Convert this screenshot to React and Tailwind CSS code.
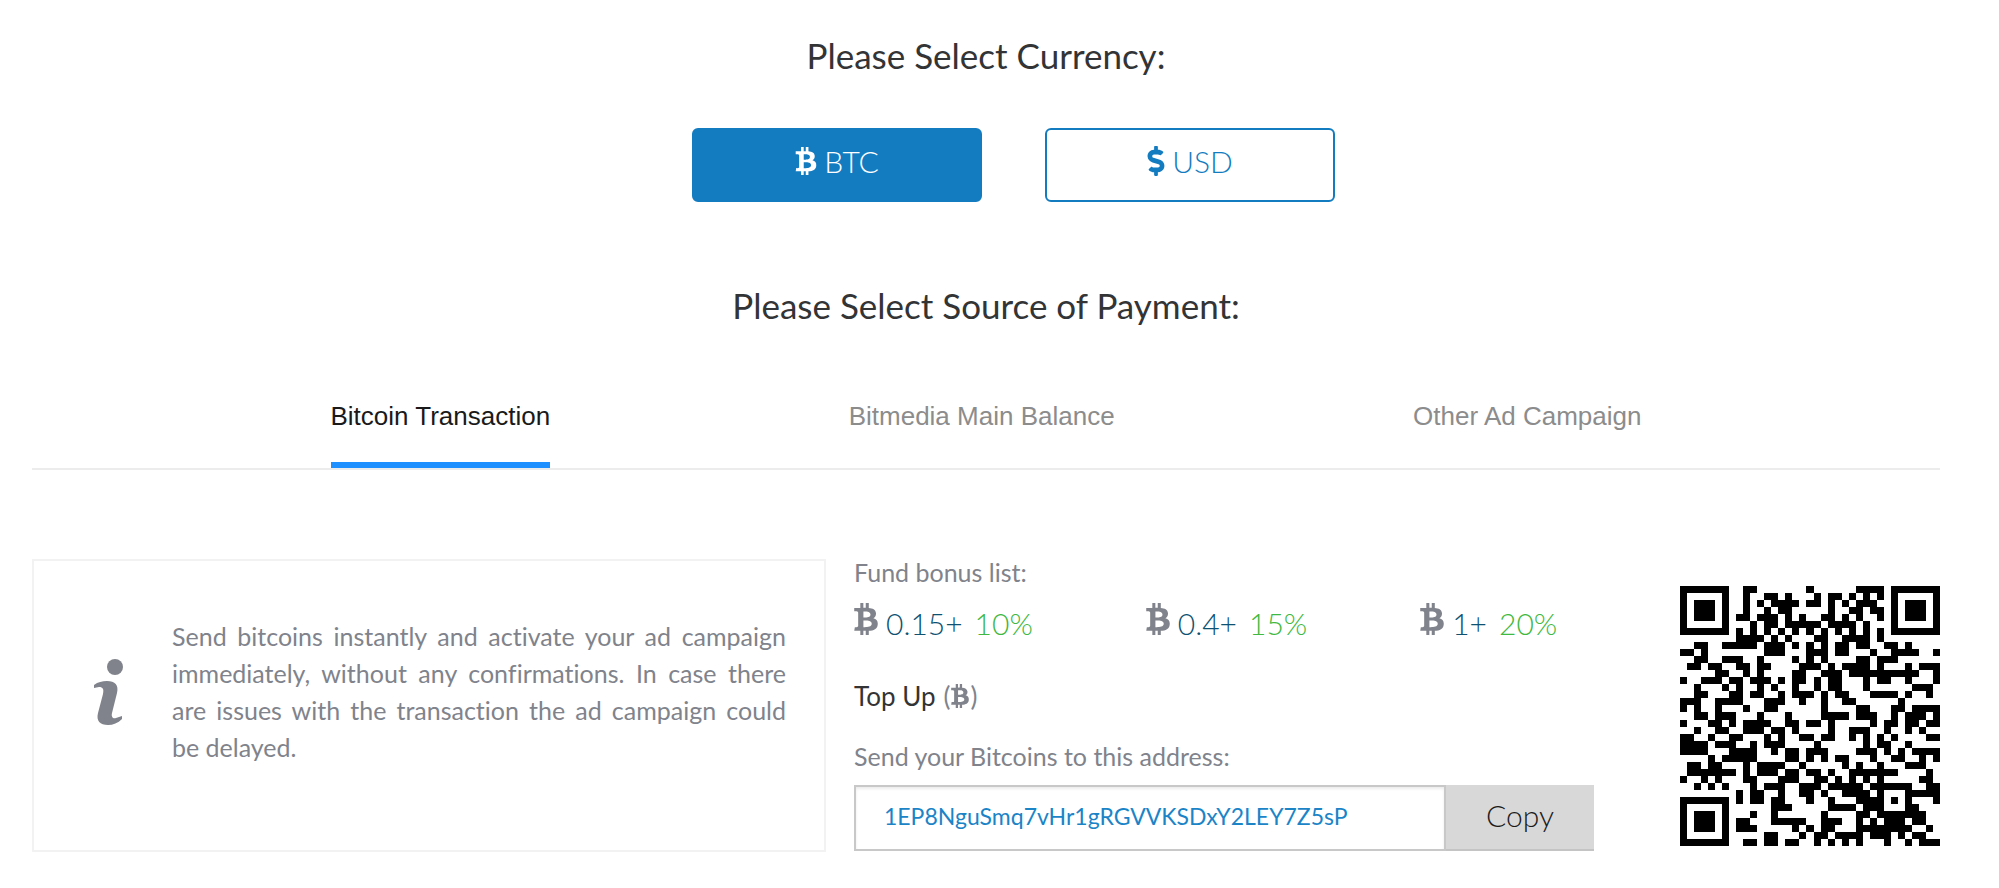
import React, { useState } from 'react';
import { FaBtc, FaDollarSign } from 'react-icons/fa';

const ADDRESS = '1EP8NguSmq7vHr1gRGVVKSDxY2LEY7Z5sP';

const tabs = ['Bitcoin Transaction', 'Bitmedia Main Balance', 'Other Ad Campaign'];

const bonuses = [
  { amount: '0.15+', percent: '10%' },
  { amount: '0.4+', percent: '15%' },
  { amount: '1+', percent: '20%' },
];

// QR code, version 5, level H, mask 3
const QR_SIZE = 37;
const QR_DATA_WORDS = 46;
const QR_BLOCKS = [11, 11, 12, 12];
const QR_EC_WORDS = 22;
const QR_FORMAT = '001100111010000';

const gfMul = (a, b) => {
  let r = 0;
  for (let i = 7; i >= 0; i--) {
    r = (r << 1) ^ ((r >>> 7) * 0x11d);
    r ^= ((b >>> i) & 1) * a;
  }
  return r;
};

const ecDivisor = (degree) => {
  const res = new Array(degree).fill(0);
  res[degree - 1] = 1;
  let root = 1;
  for (let i = 0; i < degree; i++) {
    for (let j = 0; j < degree; j++) {
      res[j] = gfMul(res[j], root);
      if (j + 1 < degree) res[j] ^= res[j + 1];
    }
    root = gfMul(root, 2);
  }
  return res;
};

const ecWords = (data) => {
  const divisor = ecDivisor(QR_EC_WORDS);
  const res = new Array(QR_EC_WORDS).fill(0);
  data.forEach((b) => {
    const factor = b ^ res.shift();
    res.push(0);
    divisor.forEach((d, i) => { res[i] ^= gfMul(d, factor); });
  });
  return res;
};

const buildQr = (text) => {
  // Mode, length, payload, terminator, padding
  let bits = '0100' + text.length.toString(2).padStart(8, '0');
  for (const ch of text) bits += ch.charCodeAt(0).toString(2).padStart(8, '0');
  bits += '0000';
  const words = bits.match(/.{8}/g).map((b) => parseInt(b, 2));
  for (let pad = 0xec; words.length < QR_DATA_WORDS; pad ^= 0xec ^ 0x11) words.push(pad);

  let pos = 0;
  const blocks = QR_BLOCKS.map((len) => words.slice(pos, (pos += len)));
  const ecs = blocks.map(ecWords);
  const out = [];
  for (let i = 0; i < 12; i++) blocks.forEach((b) => i < b.length && out.push(b[i]));
  for (let i = 0; i < QR_EC_WORDS; i++) ecs.forEach((e) => out.push(e[i]));
  const stream = out.map((w) => w.toString(2).padStart(8, '0')).join('');

  const grid = Array.from({ length: QR_SIZE }, () => new Array(QR_SIZE).fill(null));
  const set = (r, c, v) => {
    if (r >= 0 && c >= 0 && r < QR_SIZE && c < QR_SIZE) grid[r][c] = v ? 1 : 0;
  };

  // Timing, finder and alignment patterns
  for (let i = 0; i < QR_SIZE; i++) {
    set(6, i, i % 2 === 0);
    set(i, 6, i % 2 === 0);
  }
  [[3, 3], [3, QR_SIZE - 4], [QR_SIZE - 4, 3]].forEach(([r, c]) => {
    for (let y = -4; y <= 4; y++) {
      for (let x = -4; x <= 4; x++) {
        const d = Math.max(Math.abs(x), Math.abs(y));
        set(r + y, c + x, d !== 2 && d !== 4);
      }
    }
  });
  for (let y = -2; y <= 2; y++) {
    for (let x = -2; x <= 2; x++) set(30 + y, 30 + x, Math.max(Math.abs(x), Math.abs(y)) !== 1);
  }

  // Format bits, two copies
  const f = QR_FORMAT.split('').map(Number);
  [0, 1, 2, 3, 4, 5, 7, 8].forEach((c, i) => set(8, c, f[i]));
  [7, 5, 4, 3, 2, 1, 0].forEach((r, i) => set(r, 8, f[8 + i]));
  for (let i = 0; i < 7; i++) set(QR_SIZE - 1 - i, 8, f[i]);
  for (let i = 7; i < 15; i++) set(8, QR_SIZE - 15 + i, f[i]);
  set(QR_SIZE - 8, 8, 1);

  // Zigzag placement from the right edge
  let n = 0;
  for (let right = QR_SIZE - 1; right >= 1; right -= 2) {
    if (right === 6) right = 5;
    const upward = ((right + 1) & 2) === 0;
    for (let v = 0; v < QR_SIZE; v++) {
      for (let j = 0; j < 2; j++) {
        const c = right - j;
        const r = upward ? QR_SIZE - 1 - v : v;
        if (grid[r][c] !== null) continue;
        const bit = n < stream.length ? Number(stream[n]) : 0;
        grid[r][c] = bit ^ ((r + c) % 3 === 0 ? 1 : 0);
        n++;
      }
    }
  }
  return grid;
};

function QrCode({ value }) {
  const path = buildQr(value)
    .map((row, r) => row.map((on, c) => (on ? `M${c} ${r}h1v1h-1z` : '')).join(''))
    .join('');
  return (
    <svg viewBox={`0 0 ${QR_SIZE} ${QR_SIZE}`} className="w-[260px] h-[260px] shrink-0" shapeRendering="crispEdges" role="img" aria-label="Bitcoin address QR code">
      <path d={path} fill="#000" />
    </svg>
  );
}

function InfoIcon() {
  return (
    <svg viewBox="0 0 30 66" className="w-[30px] h-[66px] shrink-0" fill="#80838b" aria-hidden="true">
      <circle cx="21" cy="8" r="8" />
      <path d="M0 26C4 23 8 22 13 22C21 22 25 26 23 34L18 54C17 58 19 60 22 59L28 57L28 60C24 64 19 66 14 66C6 66 2 62 4 54L9 35C10 30 9 28 5 28L0 29Z" />
    </svg>
  );
}

export default function App() {
  const [currency, setCurrency] = useState('BTC');
  const [activeTab, setActiveTab] = useState(tabs[0]);

  const currencyClass = (name) =>
    `w-[290px] h-[74px] pb-2 flex items-center justify-center gap-1.5 rounded-md border-2 border-[#137cc1] text-[30px] font-light cursor-pointer ${currency === name ? 'bg-[#137cc1] text-white' : 'bg-white text-[#137cc1]'}`;

  return (
    <div className="bg-white pl-8 pr-[59px] pt-8 pb-9 font-['Lato',sans-serif] text-[#80838b] [font-variant-ligatures:none]">
      <h2 className="text-center text-[35px] leading-[46px] text-[#333436]">Please Select Currency:</h2>

      <div className="mt-[50px] pl-[54px] flex justify-center gap-[63px]">
        <button type="button" className={currencyClass('BTC')} onClick={() => setCurrency('BTC')}>
          <FaBtc className="w-6 h-7" /> BTC
        </button>
        <button type="button" className={currencyClass('USD')} onClick={() => setCurrency('USD')}>
          <FaDollarSign className="w-5 h-[30px]" /> USD
        </button>
      </div>

      <h2 className="mt-20 text-center text-[35px] leading-[46px] text-[#333436]">Please Select Source of Payment:</h2>

      <div role="tablist" className="mt-[50px] flex justify-evenly border-b-2 border-[#ececec] font-['Liberation_Sans',Arial,sans-serif] text-[26px]">
        {tabs.map((tab) => (
          <button
            key={tab}
            type="button"
            role="tab"
            aria-selected={activeTab === tab}
            onClick={() => setActiveTab(tab)}
            className={`pt-[14px] pb-[22px] leading-12 border-b-6 cursor-pointer ${activeTab === tab ? 'border-[#1e90ff] text-[#1a1a1a]' : 'border-transparent text-[#8c8c8c]'}`}
          >
            {tab}
          </button>
        ))}
      </div>

      <div className="mt-[89px] flex">
        <section className="flex-1 h-[293px] flex items-center border-2 border-[#f2f2f3] pl-[60px] pr-[38px] pb-7">
          <InfoIcon />
          <p className="ml-12 text-[25px] leading-[37px] text-justify">
            Send bitcoins instantly and activate your ad campaign immediately, without any confirmations. In case there are issues with the transaction the ad campaign could be delayed.
          </p>
        </section>

        <section className="w-[740px] ml-7">
          <p className="text-[25px] leading-[26px]">Fund bonus list:</p>
          <ul className="mt-[18px] flex gap-[113px] text-[30px] leading-10 font-light">
            {bonuses.map((b) => (
              <li key={b.percent} className="flex">
                <FaBtc className="w-6 h-8 mr-2" />
                <span className="text-[#0d5272]">{b.amount}</span>
                <span className="ml-3 text-[#3fb941]">{b.percent}</span>
              </li>
            ))}
          </ul>
          <p className="mt-[34px] flex items-center text-[26px] leading-[38px]">
            <span className="text-[#333436]">Top Up</span>
            <span className="ml-2">(</span>
            <FaBtc className="w-5 h-6" />
            <span>)</span>
          </p>
          <label htmlFor="address" className="mt-[22px] block text-[25px] leading-[38px]">Send your Bitcoins to this address:</label>
          <div className="mt-[10px] flex h-[66px]">
            <input
              id="address"
              readOnly
              value={ADDRESS}
              className="flex-1 min-w-0 border-2 border-[#c8c8c8] pl-7 pb-1 text-[23px] text-[#1b84c7] shadow-[inset_0_2px_3px_rgba(0,0,0,0.08)] outline-none"
            />
            <button
              type="button"
              onClick={() => navigator.clipboard?.writeText(ADDRESS)}
              className="w-[148px] pb-1 bg-[#d8d8d8] border-b-2 border-[#c4c4c4] text-[30px] font-light text-[#1c1c1c] cursor-pointer"
            >
              Copy
            </button>
          </div>
        </section>

        <div className="ml-[86px] pt-[27px]">
          <QrCode value={ADDRESS} />
        </div>
      </div>
    </div>
  );
}
